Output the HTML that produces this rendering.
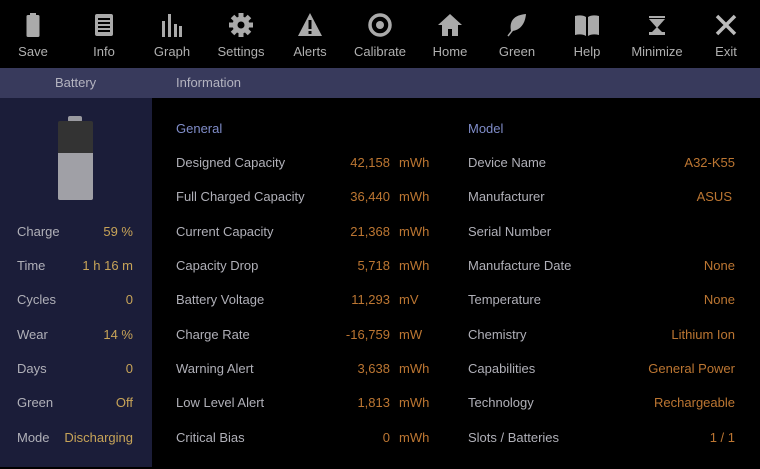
<!DOCTYPE html>
<html><head><meta charset="utf-8"><style>
*{margin:0;padding:0;box-sizing:border-box}
body{width:760px;height:469px;background:#000;font-family:"Liberation Sans",sans-serif;font-size:13px;color:#b0b0b8;position:relative;overflow:hidden}
.tb{position:absolute;top:0;left:0;width:760px;height:68px}
.it{position:absolute;top:0;width:70px;margin-left:-35px;text-align:center}
.it svg{position:absolute;top:12px;left:22px;width:26px;height:26px}
.it span{position:absolute;top:44px;left:0;width:70px;text-align:center;font-size:13px;color:#b0b0b0}
.hdr{position:absolute;top:68px;left:0;width:760px;height:30px;background:#383a5c}
.hdr span{position:absolute;top:7px;color:#b4b4c0}
.side{position:absolute;top:98px;left:0;width:152px;height:369px;background:#1b1d39}
.t{position:absolute;white-space:nowrap;line-height:15px}
.y{color:#c8a458}
.o{color:#bc7632}
.b{color:#7f8cc8}
.r{text-align:right}
</style></head><body>
<div class="tb">
<div class="it" style="left:33px"><svg viewBox="0 0 26 26"><rect x="10" y="1" width="6" height="3" fill="#aaa"/><rect x="6.5" y="3" width="13" height="22" rx="1.5" fill="#aaa"/></svg><span>Save</span></div>
<div class="it" style="left:104px"><svg viewBox="0 0 26 26"><rect x="4" y="2" width="18" height="22" rx="2" fill="#aaa"/><g fill="#000"><rect x="7" y="6" width="12" height="2"/><rect x="7" y="10" width="12" height="2"/><rect x="7" y="14" width="12" height="2"/><rect x="7" y="18" width="12" height="2"/></g></svg><span>Info</span></div>
<div class="it" style="left:172px"><svg viewBox="0 0 26 26"><g fill="#aaa"><rect x="3" y="9" width="3" height="16"/><rect x="9" y="2" width="3" height="23"/><rect x="15" y="12" width="3" height="13"/><rect x="20" y="14" width="3" height="11"/></g></svg><span>Graph</span></div>
<div class="it" style="left:241px"><svg viewBox="0 0 26 26"><g fill="#aaa"><circle cx="13" cy="13" r="8.5"/><g><rect x="10.5" y="1" width="5" height="24"/><rect x="10.5" y="1" width="5" height="24" transform="rotate(45 13 13)"/><rect x="10.5" y="1" width="5" height="24" transform="rotate(90 13 13)"/><rect x="10.5" y="1" width="5" height="24" transform="rotate(135 13 13)"/></g></g><circle cx="13" cy="13" r="3.5" fill="#000"/></svg><span>Settings</span></div>
<div class="it" style="left:310px"><svg viewBox="0 0 26 26"><path d="M13 1L25 24H1Z" fill="#aaa"/><rect x="11.5" y="8" width="3" height="9" fill="#000"/><rect x="11.5" y="19" width="3" height="3" fill="#000"/></svg><span>Alerts</span></div>
<div class="it" style="left:380px"><svg viewBox="0 0 26 26"><circle cx="13" cy="13" r="10" fill="none" stroke="#aaa" stroke-width="3.5"/><circle cx="13" cy="13" r="4" fill="#aaa"/></svg><span>Calibrate</span></div>
<div class="it" style="left:450px"><svg viewBox="0 0 26 26"><path d="M13 2L25 13H21V24H15V17H11V24H5V13H1Z" fill="#aaa"/></svg><span>Home</span></div>
<div class="it" style="left:517px"><svg viewBox="0 0 26 26"><path d="M22 2C10 3 5 9 7 19C14 19 21 14 22 2Z" fill="#aaa"/><path d="M4 24L15 10" stroke="#aaa" stroke-width="1.5"/></svg><span>Green</span></div>
<div class="it" style="left:587px"><svg viewBox="0 0 26 26"><path d="M1 4C5 3 9 3 12 5V24C9 22 5 22 1 23Z M25 4C21 3 17 3 14 5V24C17 22 21 22 25 23Z" fill="#aaa"/></svg><span>Help</span></div>
<div class="it" style="left:657px"><svg viewBox="0 0 26 26"><path d="M5 7H21L13 16Z" fill="#aaa"/><rect x="5" y="4" width="16" height="2" fill="#aaa"/><path d="M8 20L13 15L18 20Z" fill="#aaa"/><rect x="5" y="20" width="16" height="3" fill="#aaa"/></svg><span>Minimize</span></div>
<div class="it" style="left:726px"><svg viewBox="0 0 26 26"><path d="M4 4L22 22M22 4L4 22" stroke="#bbb" stroke-width="3.5"/></svg><span>Exit</span></div>
</div>
<div class="hdr"><span style="left:55px">Battery</span><span style="left:176px">Information</span></div>
<div class="side">
<svg style="position:absolute;left:58px;top:18px" width="36" height="84" viewBox="0 0 36 84"><rect x="10" y="0" width="14" height="6" rx="2" fill="#9a9aa0"/><rect x="0" y="5" width="35" height="79" rx="2" fill="#333"/><rect x="0" y="37" width="35" height="47" rx="2" fill="#a0a0a6"/><rect x="0" y="37" width="35" height="4" fill="#a0a0a6"/></svg>
</div>
<div class="t" style="left:17px;top:224px">Charge</div><div class="t y r" style="right:627px;top:224px">59 %</div>
<div class="t" style="left:17px;top:258px">Time</div><div class="t y r" style="right:627px;top:258px">1 h 16 m</div>
<div class="t" style="left:17px;top:292px">Cycles</div><div class="t y r" style="right:627px;top:292px">0</div>
<div class="t" style="left:17px;top:327px">Wear</div><div class="t y r" style="right:627px;top:327px">14 %</div>
<div class="t" style="left:17px;top:361px">Days</div><div class="t y r" style="right:627px;top:361px">0</div>
<div class="t" style="left:17px;top:395px">Green</div><div class="t y r" style="right:627px;top:395px">Off</div>
<div class="t" style="left:17px;top:430px">Mode</div><div class="t y r" style="right:627px;top:430px">Discharging</div>

<div class="t b" style="left:176px;top:121px">General</div>
<div class="t b" style="left:468px;top:121px">Model</div>

<div class="t" style="left:176px;top:155px">Designed Capacity</div><div class="t o r" style="right:370px;top:155px">42,158</div><div class="t o" style="left:399px;top:155px">mWh</div>
<div class="t" style="left:176px;top:189px">Full Charged Capacity</div><div class="t o r" style="right:370px;top:189px">36,440</div><div class="t o" style="left:399px;top:189px">mWh</div>
<div class="t" style="left:176px;top:224px">Current Capacity</div><div class="t o r" style="right:370px;top:224px">21,368</div><div class="t o" style="left:399px;top:224px">mWh</div>
<div class="t" style="left:176px;top:258px">Capacity Drop</div><div class="t o r" style="right:370px;top:258px">5,718</div><div class="t o" style="left:399px;top:258px">mWh</div>
<div class="t" style="left:176px;top:292px">Battery Voltage</div><div class="t o r" style="right:370px;top:292px">11,293</div><div class="t o" style="left:399px;top:292px">mV</div>
<div class="t" style="left:176px;top:327px">Charge Rate</div><div class="t o r" style="right:370px;top:327px">-16,759</div><div class="t o" style="left:399px;top:327px">mW</div>
<div class="t" style="left:176px;top:361px">Warning Alert</div><div class="t o r" style="right:370px;top:361px">3,638</div><div class="t o" style="left:399px;top:361px">mWh</div>
<div class="t" style="left:176px;top:395px">Low Level Alert</div><div class="t o r" style="right:370px;top:395px">1,813</div><div class="t o" style="left:399px;top:395px">mWh</div>
<div class="t" style="left:176px;top:430px">Critical Bias</div><div class="t o r" style="right:370px;top:430px">0</div><div class="t o" style="left:399px;top:430px">mWh</div>

<div class="t" style="left:468px;top:155px">Device Name</div><div class="t o r" style="right:25px;top:155px">A32-K55</div>
<div class="t" style="left:468px;top:189px">Manufacturer</div><div class="t o r" style="right:28px;top:189px">ASUS</div>
<div class="t" style="left:468px;top:224px">Serial Number</div>
<div class="t" style="left:468px;top:258px">Manufacture Date</div><div class="t o r" style="right:25px;top:258px">None</div>
<div class="t" style="left:468px;top:292px">Temperature</div><div class="t o r" style="right:25px;top:292px">None</div>
<div class="t" style="left:468px;top:327px">Chemistry</div><div class="t o r" style="right:25px;top:327px">Lithium Ion</div>
<div class="t" style="left:468px;top:361px">Capabilities</div><div class="t o r" style="right:25px;top:361px">General Power</div>
<div class="t" style="left:468px;top:395px">Technology</div><div class="t o r" style="right:25px;top:395px">Rechargeable</div>
<div class="t" style="left:468px;top:430px">Slots / Batteries</div><div class="t o r" style="right:25px;top:430px">1 / 1</div>
</body></html>
